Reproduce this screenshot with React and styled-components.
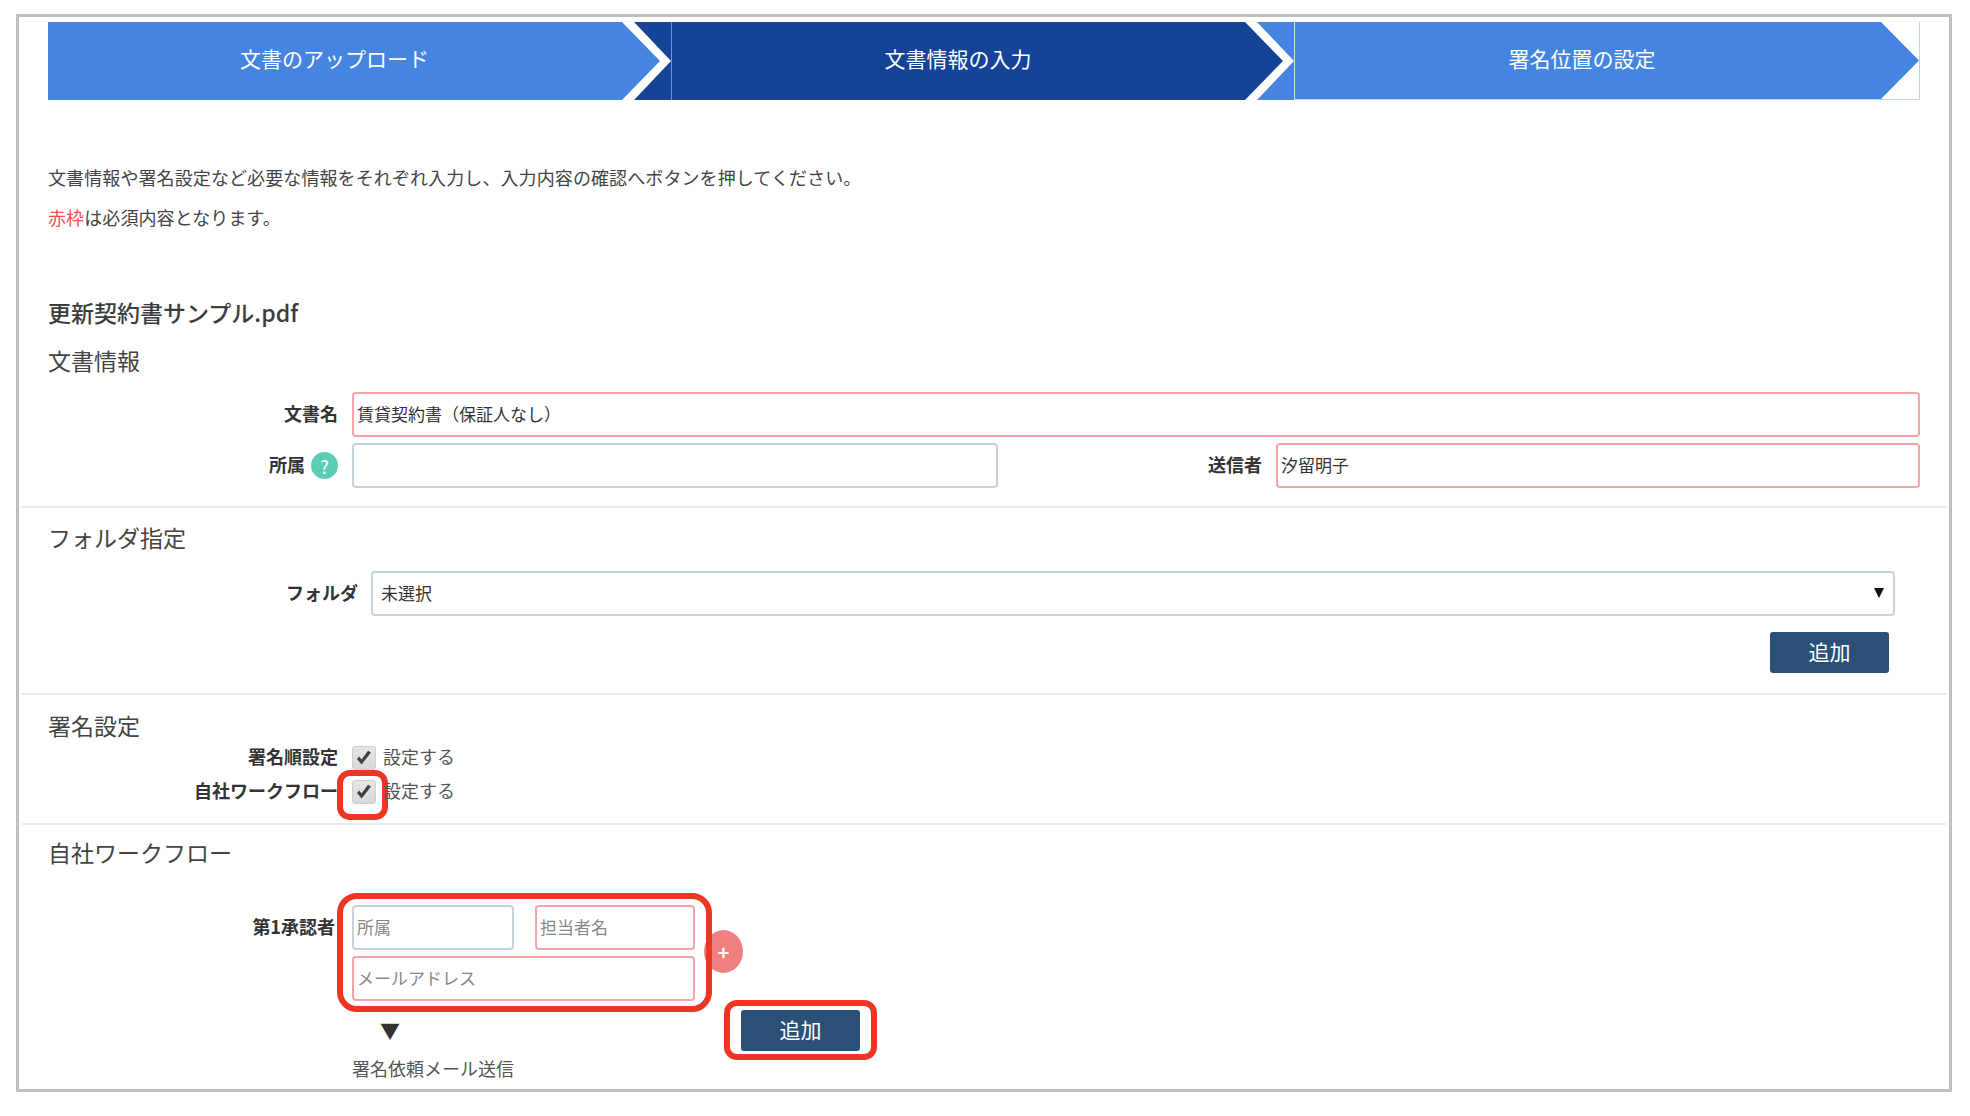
import React from 'react';
import styled, { createGlobalStyle } from 'styled-components';

const BLUE = '#4585e0';
const NAVY = '#154496';

const GlobalStyle = createGlobalStyle`
    html, body {
        margin: 0;
        background: #fff;
    }
    body {
        font-family: "Noto Sans CJK JP", "Noto Sans", sans-serif;
        color: #444;
    }
    * {
        box-sizing: border-box;
    }
`;

function App() {
    return (
        <>
            <GlobalStyle />
            <Frame>
                <StepBar>
                    <Step $fill={BLUE} $next={NAVY}>
                        <StepLabel>文書のアップロード</StepLabel>
                    </Step>
                    <Step $fill={NAVY} $next={BLUE} $edge="rgba(255,255,255,.14)">
                        <StepLabel>文書情報の入力</StepLabel>
                    </Step>
                    <LastStep $fill={BLUE} $next="#fff" $edge="rgba(0,0,0,.14)">
                        <StepLabel>署名位置の設定</StepLabel>
                    </LastStep>
                </StepBar>

                <Section>
                    <Intro>文書情報や署名設定など必要な情報をそれぞれ入力し、入力内容の確認へボタンを押してください。</Intro>
                    <Intro><Red>赤枠</Red>は必須内容となります。</Intro>
                    <FileName>更新契約書サンプル.pdf</FileName>
                    <Heading $top={12}>文書情報</Heading>
                    <FieldRow $columns="290px 1fr" $top={13}>
                        <Label>文書名</Label>
                        <TextInput $required defaultValue="賃貸契約書（保証人なし）" />
                    </FieldRow>
                    <FieldRow $columns="290px 646px 1fr 644px" $top={6}>
                        <Label>所属<HelpBadge>?</HelpBadge></Label>
                        <TextInput />
                        <Label>送信者</Label>
                        <TextInput $required defaultValue="汐留明子" />
                    </FieldRow>
                </Section>

                <Section $padTop={12} $padBottom={20} $divided>
                    <Heading>フォルダ指定</Heading>
                    <FieldRow $columns="310px 1524px" $top={15} $gap={13}>
                        <Label>フォルダ</Label>
                        <SelectWrap>
                            <FolderSelect defaultValue="none">
                                <option value="none">未選択</option>
                            </FolderSelect>
                        </SelectWrap>
                    </FieldRow>
                    <FolderActions>
                        <AddButton>追加</AddButton>
                    </FolderActions>
                </Section>

                <Section $padTop={13} $padBottom={19} $divided>
                    <Heading>署名設定</Heading>
                    <CheckRow $top={2}>
                        <Label>署名順設定</Label>
                        <CheckLabel>
                            <CheckBox><CheckMark /></CheckBox>
                            <CheckText>設定する</CheckText>
                        </CheckLabel>
                    </CheckRow>
                    <CheckRow $top={10}>
                        <Label>自社ワークフロー</Label>
                        <CheckLabel>
                            <CheckBox>
                                <CheckMark />
                                <Callout $inset="-11px -13px -17px -16px" />
                            </CheckBox>
                            <CheckText>設定する</CheckText>
                        </CheckLabel>
                    </CheckRow>
                </Section>

                <Section $padTop={10} $divided>
                    <Heading>自社ワークフロー</Heading>
                    <ApproverRow>
                        <ApproverLabel>第1承認者</ApproverLabel>
                        <div>
                            <ApproverTop>
                                <ApproverFields>
                                    <TextInput placeholder="所属" />
                                    <TextInput $required placeholder="担当者名" />
                                    <MailField $required placeholder="メールアドレス" />
                                    <Callout $inset="-12px -17px -11px -15px" $radius={20} />
                                </ApproverFields>
                                <PlusButton>+</PlusButton>
                            </ApproverTop>
                            <ApproverBottom>
                                <SendColumn>
                                    <DownArrow>▼</DownArrow>
                                    <SendText>署名依頼メール送信</SendText>
                                </SendColumn>
                                <ButtonHolder>
                                    <AddButton>追加</AddButton>
                                    <Callout $inset="-10px -17px -9px -17px" />
                                </ButtonHolder>
                            </ApproverBottom>
                        </div>
                    </ApproverRow>
                </Section>
            </Frame>
        </>
    );
}

function CheckMark() {
    return (
        <svg width="18" height="18" viewBox="0 0 18 18">
            <path d="M2 10 L6.6 15.5 L16 3.5 L13 1.8 L6.6 10.5 L4.2 7.6 Z" fill="#3f3f3f" />
        </svg>
    );
}

const Frame = styled.div`
    width: 1936px;
    height: 1078px;
    margin: 14px 0 0 16px;
    border: 3px solid #bfbfbf;
    background: #fff;
    overflow: hidden;
`;

const StepBar = styled.div`
    display: grid;
    grid-template-columns: 623px 623px 1fr;
    margin: 5px 29px 0;
    height: 78px;
`;

const Step = styled.div`
    position: relative;
    display: flex;
    align-items: center;
    justify-content: center;
    padding: 0 50px 6px 0;
    background: ${props => props.$next};
    border-left: ${props => props.$edge ? `1px solid ${props.$edge}` : 'none'};

    &::before {
        content: "";
        position: absolute;
        inset: 0;
        background: #fff;
        clip-path: polygon(0 0, calc(100% - 37px) 0, 100% 50%, calc(100% - 37px) 100%, 0 100%);
    }

    &::after {
        content: "";
        position: absolute;
        inset: 0;
        background: ${props => props.$fill};
        clip-path: polygon(0 0, calc(100% - 49px) 0, calc(100% - 11px) 50%, calc(100% - 49px) 100%, 0 100%);
    }
`;

const LastStep = styled(Step)`
    border-right: 1px solid #bcd3f3;
    border-bottom: 1px solid #bcd3f3;

    &::before {
        display: none;
    }

    &::after {
        clip-path: polygon(0 0, calc(100% - 38px) 0, 100% 50%, calc(100% - 38px) 100%, 0 100%);
    }
`;

const StepLabel = styled.span`
    position: relative;
    z-index: 1;
    color: #fff;
    font-size: 21px;
    line-height: 30px;
`;

const Section = styled.section`
    margin: 0 3px;
    padding: ${props => props.$padTop || 0}px 26px ${props => props.$padBottom || 18}px;
    border-top: ${props => props.$divided ? '2px solid #ebebeb' : 'none'};
`;

const Intro = styled.p`
    margin: 0;
    font-size: 18px;
    letter-spacing: 0.1px;
    line-height: 40px;
    color: #444;

    &:first-child {
        margin-top: 57px;
    }
`;

const Red = styled.span`
    color: #f0504f;
`;

const FileName = styled.h1`
    margin: 58px 0 0;
    padding-bottom: 2px;
    font-size: 23px;
    font-weight: 500;
    line-height: 34px;
    color: #3c3c3c;
`;

const Heading = styled.h2`
    margin: ${props => props.$top || 0}px 0 0;
    padding-bottom: 2px;
    font-size: 23px;
    font-weight: 400;
    line-height: 34px;
    color: #444;
`;

const FieldRow = styled.div`
    display: grid;
    grid-template-columns: ${props => props.$columns};
    column-gap: ${props => props.$gap || 14}px;
    margin-top: ${props => props.$top}px;
    align-items: center;
`;

const Label = styled.label`
    display: flex;
    align-items: center;
    justify-content: flex-end;
    gap: 6px;
    min-height: 24px;
    font-size: 18px;
    font-weight: 700;
    line-height: 24px;
    color: #333;
    white-space: nowrap;
    transform: translateY(-2px);
`;

const HelpBadge = styled.span`
    display: flex;
    align-items: center;
    justify-content: center;
    width: 27px;
    height: 27px;
    border-radius: 50%;
    background: #5ecdb8;
    color: #fff;
    font-size: 18px;
    font-weight: 400;
    transform: translateY(2px);
`;

const TextInput = styled.input`
    display: block;
    width: 100%;
    height: 45px;
    padding: 0 3px 3px;
    border: 2px solid ${props => props.$required ? '#f4a6a6' : '#c8d2dd'};
    border-radius: 4px;
    background: #fff;
    font-family: inherit;
    font-size: 17px;
    color: #333;
    outline: none;

    &::placeholder {
        color: #888;
        opacity: 1;
    }
`;

const SelectWrap = styled.div`
    position: relative;

    &::after {
        content: "";
        position: absolute;
        top: 17px;
        right: 11px;
        border-left: 5px solid transparent;
        border-right: 5px solid transparent;
        border-top: 10px solid #111;
        pointer-events: none;
    }
`;

const FolderSelect = styled.select`
    display: block;
    width: 100%;
    height: 45px;
    padding: 0 8px 3px;
    appearance: none;
    border: 2px solid #c8d2dd;
    border-radius: 4px;
    background: #fff;
    font-family: inherit;
    font-size: 17px;
    color: #333;
`;

const FolderActions = styled.div`
    display: flex;
    justify-content: flex-end;
    margin-top: 16px;
    padding-right: 31px;
`;

const AddButton = styled.button`
    display: block;
    width: 119px;
    height: 41px;
    padding: 0 0 3px;
    border: none;
    border-radius: 3px;
    background: #2a5075;
    color: #fff;
    font-family: inherit;
    font-size: 21px;
    line-height: 38px;
`;

const CheckRow = styled.div`
    display: grid;
    grid-template-columns: 290px 1fr;
    column-gap: 14px;
    align-items: center;
    margin-top: ${props => props.$top}px;
`;

const CheckLabel = styled.div`
    display: flex;
    align-items: center;
    gap: 7px;
`;

const CheckText = styled.span`
    font-size: 18px;
    line-height: 24px;
    color: #555;
    transform: translateY(-2px);
`;

const CheckBox = styled.span`
    position: relative;
    display: flex;
    align-items: center;
    justify-content: center;
    width: 24px;
    height: 24px;
    border: 1px solid #cfcfcf;
    border-radius: 3px;
    background: linear-gradient(#e6e6e6, #d8d8d8);
`;

const Callout = styled.span`
    position: absolute;
    inset: ${props => props.$inset};
    border: 6px solid #ee3524;
    border-radius: ${props => props.$radius || 13}px;
    pointer-events: none;
`;

const ApproverRow = styled.div`
    display: grid;
    grid-template-columns: 290px 1fr;
    column-gap: 14px;
    margin-top: 34px;
`;

const ApproverLabel = styled(Label)`
    align-self: start;
    margin-top: 11px;
    padding-right: 3px;
`;

const ApproverTop = styled.div`
    display: flex;
    align-items: flex-start;
`;

const ApproverFields = styled.div`
    position: relative;
    display: grid;
    grid-template-columns: 162px 160px;
    column-gap: 21px;
    row-gap: 6px;
    width: 343px;
`;

const MailField = styled(TextInput)`
    grid-column: 1 / -1;
`;

const PlusButton = styled.button`
    width: 39px;
    height: 43px;
    margin: 25px 0 0 9px;
    padding: 0;
    border: none;
    border-radius: 50%;
    background: #f08080;
    color: #fff;
    font-family: inherit;
    font-size: 20px;
    font-weight: 700;
    line-height: 43px;
`;

const ApproverBottom = styled.div`
    display: flex;
    align-items: flex-start;
`;

const SendColumn = styled.div`
    width: 389px;
`;

const DownArrow = styled.div`
    margin: 18px 0 0 28px;
    font-size: 20px;
    line-height: 24px;
    color: #333;
`;

const SendText = styled.div`
    margin-top: 12px;
    font-size: 18px;
    line-height: 26px;
    color: #555;
`;

const ButtonHolder = styled.div`
    position: relative;
    margin-top: 9px;
`;

export default App;
